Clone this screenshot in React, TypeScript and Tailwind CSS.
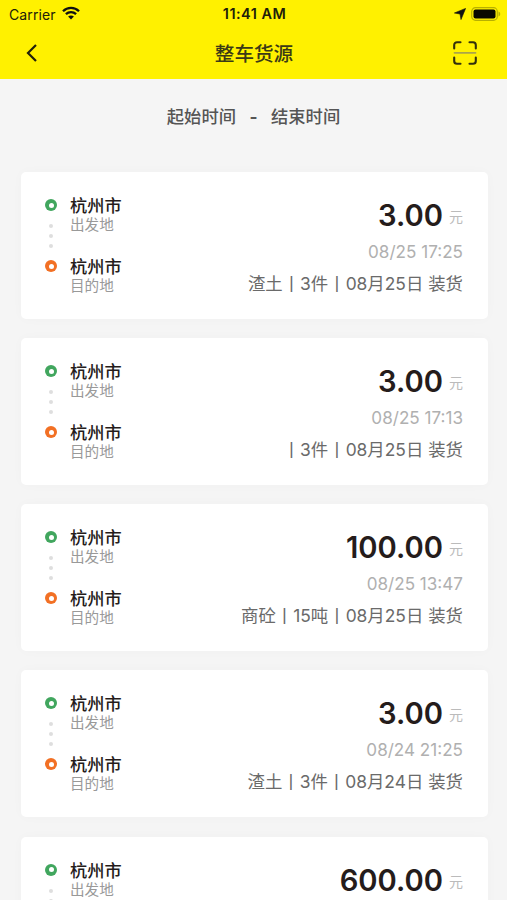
type Load = { price: string; time: string; detail: string };

const loads: Load[] = [
  { price: '3.00', time: '08/25 17:25', detail: '渣土丨3件丨08月25日 装货' },
  { price: '3.00', time: '08/25 17:13', detail: '丨3件丨08月25日 装货' },
  { price: '100.00', time: '08/25 13:47', detail: '商砼丨15吨丨08月25日 装货' },
  { price: '3.00', time: '08/24 21:25', detail: '渣土丨3件丨08月24日 装货' },
  { price: '600.00', time: '', detail: '' },
];

function StatusBar() {
  return (
    <div className="flex h-7 items-center pl-[9px] pr-[6px] text-[14px] text-[#20200a]">
      <div className="flex flex-1 items-center gap-[6px]">
        <span className="tracking-[0.1px]">Carrier</span>
        <svg width="18" height="14" viewBox="0 0 18 14" fill="none" stroke="#111" strokeWidth="2.3" className="-mt-[2px]">
          <path d="M1 5.2C5.5.7 12.500.7 17 5.200" />
          <path d="M3.900 8.200c2.900-2.800 7.300-2.800 10.200 0" />
          <path d="M9 13.500 6.100 10.600c1.600-1.500 4.200-1.500 5.800 0z" fill="#111" stroke="none" />
        </svg>
      </div>
      <span className="mr-[1px] text-[14.4px] font-semibold tracking-[0.5px]">11:41 AM</span>
      <div className="flex flex-1 items-center justify-end gap-[5px]">
        <svg width="12" height="12" viewBox="0 0 12 12">
          <path d="M11.600.4 7 11.600 6 6 .4 5z" fill="#111" stroke="#111" strokeWidth=".6" strokeLinejoin="round" />
        </svg>
        <svg width="30" height="14" viewBox="0 0 30 14">
          <rect x=".7" y=".7" width="25.600" height="12.600" rx="3.800" fill="none" stroke="#b8b000" strokeWidth="1.200" />
          <rect x="2.500" y="2.500" width="22" height="9" rx="2" fill="#090900" />
          <path d="M27.500 4.500c2.300 1 2.300 4 0 5z" fill="#b8b000" />
        </svg>
      </div>
    </div>
  );
}

function NavBar() {
  return (
    <div className="flex h-[51px] items-center justify-between pl-[25px] pr-[30px]">
      <svg width="14" height="20" viewBox="0 0 14 20" fill="none" stroke="#20200a" strokeWidth="2.2" className="-mt-[2px]">
        <path d="M11 2 3 10l8 8" />
      </svg>
      <h1 className="ml-[16px] pt-[2px] text-[19.6px] font-medium text-[#3b3a16]">整车货源</h1>
      <svg width="24" height="24" viewBox="0 0 24 24" fill="none" stroke="#33310c" strokeWidth="2.1" strokeLinecap="round" className="-mt-[1px]">
        <path d="M1.200 7.500V4a2.800 2.800 0 0 1 2.800-2.800h3.500M16.500 1.200H20A2.800 2.800 0 0 1 22.800 4v3.500M22.800 16.500V20a2.800 2.800 0 0 1-2.800 2.800h-3.500M7.500 22.800H4A2.800 2.800 0 0 1 1.200 20v-3.500" />
        <path d="M1.500 11.800h21" stroke="#aaa44a" strokeWidth="1.800" />
      </svg>
    </div>
  );
}

function Stop({ kind }: { kind: string }) {
  return (
    <div className="flex h-[42px] flex-col">
      <span className="text-[17.2px] leading-[22px] font-medium text-[#251c1b]">杭州市</span>
      <span className="-mt-[1px] text-[14.6px] leading-[18px] text-[#999]">{kind}</span>
    </div>
  );
}

function LoadCard({ load }: { load: Load }) {
  return (
    <article className="flex h-[147px] shrink-0 rounded-[5px] bg-white pl-[24px] pr-[25px] shadow-[0_0_12px_rgba(0,0,0,0.025)]">
      <div className="flex w-[12px] flex-col items-center pt-[27px]">
        <span className="flex size-[12px] items-center justify-center rounded-full bg-[#41a65e]">
          <span className="size-[5px] rounded-full bg-white" />
        </span>
        <div className="flex h-[49px] flex-col items-center justify-center gap-[6px] pt-[1px]">
          <span className="size-[4px] rounded-full bg-[#dedede]" />
          <span className="size-[4px] rounded-full bg-[#dedede]" />
          <span className="size-[4px] rounded-full bg-[#dedede]" />
        </div>
        <span className="flex size-[12px] items-center justify-center rounded-full bg-[#f27024]">
          <span className="size-[5px] rounded-full bg-white" />
        </span>
      </div>
      <div className="ml-[13px] flex flex-col gap-[19px] pt-[23px]">
        <Stop kind="出发地" />
        <Stop kind="目的地" />
      </div>
      <div className="flex flex-1 flex-col items-end pt-[26px]">
        <div className="flex h-[36px] items-center gap-[6px]">
          <span className="text-[29.2px] leading-[36px] font-semibold text-[#251c1b]">{load.price}</span>
          <span className="pt-[2px] text-[14px] leading-[20px] text-[#bbb]">元</span>
        </div>
        <span className="mt-[6px] text-[17.1px] leading-[24px] text-[#b0b0b0]">{load.time}</span>
        <span className="mt-[8px] text-[17.4px] leading-[24px] whitespace-nowrap text-[#6a6a6a]">{load.detail}</span>
      </div>
    </article>
  );
}

export default function App() {
  return (
    <div className="flex h-[900px] w-full flex-col overflow-hidden bg-[#f5f5f5] font-[Inter,'Noto_Sans_CJK_SC',sans-serif]">
      <header className="h-[79px] shrink-0 bg-[#fff100]">
        <StatusBar />
        <NavBar />
      </header>
      <div className="flex h-[93px] shrink-0 justify-center gap-[13.5px] pt-[26px] text-[17.3px] leading-6 font-medium text-[#555]">
        <span>起始时间</span>
        <span className="font-bold">-</span>
        <span>结束时间</span>
      </div>
      <main className="flex flex-col gap-[19.17px] pl-[21px] pr-[19px]">
        {loads.map((load, i) => (
          <LoadCard key={i} load={load} />
        ))}
      </main>
    </div>
  );
}
